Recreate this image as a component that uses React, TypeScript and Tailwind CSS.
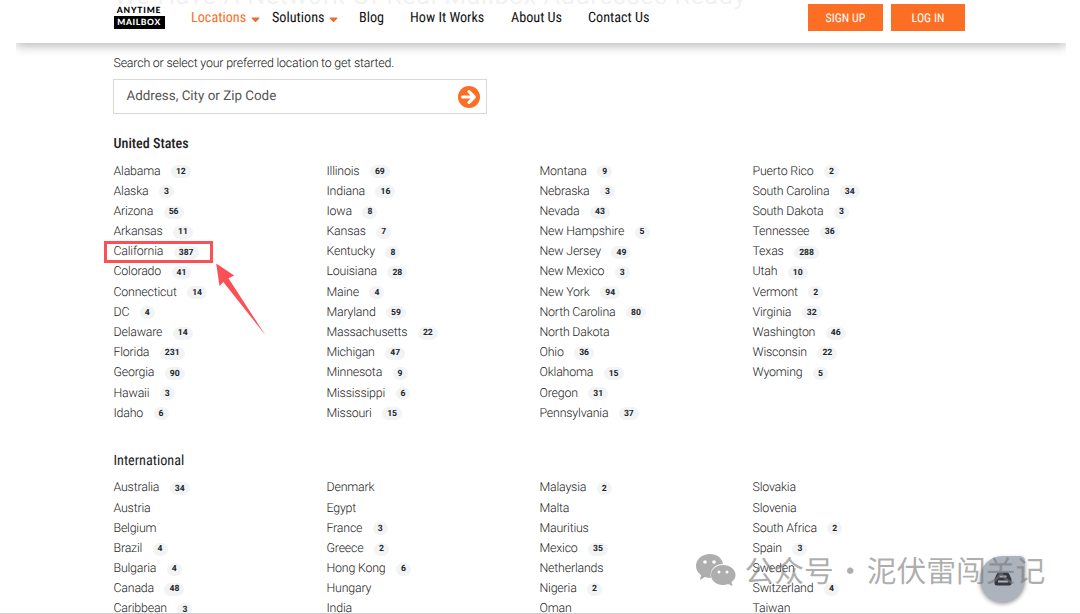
import React from "react";

type Entry = [string, number?];

const states: Entry[][] = [
  [["Alabama", 12], ["Alaska", 3], ["Arizona", 56], ["Arkansas", 11], ["California", 387], ["Colorado", 41], ["Connecticut", 14], ["DC", 4], ["Delaware", 14], ["Florida", 231], ["Georgia", 90], ["Hawaii", 3], ["Idaho", 6]],
  [["Illinois", 69], ["Indiana", 16], ["Iowa", 8], ["Kansas", 7], ["Kentucky", 8], ["Louisiana", 28], ["Maine", 4], ["Maryland", 59], ["Massachusetts", 22], ["Michigan", 47], ["Minnesota", 9], ["Mississippi", 6], ["Missouri", 15]],
  [["Montana", 9], ["Nebraska", 3], ["Nevada", 43], ["New Hampshire", 5], ["New Jersey", 49], ["New Mexico", 3], ["New York", 94], ["North Carolina", 80], ["North Dakota"], ["Ohio", 36], ["Oklahoma", 15], ["Oregon", 31], ["Pennsylvania", 37]],
  [["Puerto Rico", 2], ["South Carolina", 34], ["South Dakota", 3], ["Tennessee", 36], ["Texas", 288], ["Utah", 10], ["Vermont", 2], ["Virginia", 32], ["Washington", 46], ["Wisconsin", 22], ["Wyoming", 5]],
];

const countries: Entry[][] = [
  [["Australia", 34], ["Austria"], ["Belgium"], ["Brazil", 4], ["Bulgaria", 4], ["Canada", 48], ["Caribbean", 3]],
  [["Denmark"], ["Egypt"], ["France", 3], ["Greece", 2], ["Hong Kong", 6], ["Hungary"], ["India"]],
  [["Malaysia", 2], ["Malta"], ["Mauritius"], ["Mexico", 35], ["Netherlands"], ["Nigeria", 2], ["Oman"]],
  [["Slovakia"], ["Slovenia"], ["South Africa", 2], ["Spain", 3], ["Sweden"], ["Switzerland", 4], ["Taiwan"]],
];

const condensed = "font-['Roboto_Condensed','Roboto',sans-serif] [font-stretch:75%]";

function Columns({ data }: { data: Entry[][] }) {
  return (
    <div className="grid w-[852px] grid-cols-4">
      {data.map((column, i) => (
        <ul key={i}>
          {column.map(([name, count]) => (
            <li key={name} className="relative flex h-[20.18px] items-center whitespace-nowrap">
              <a className="pt-[2.7px] text-[12.4px] font-light tracking-[-0.2px] text-[#222]">{name}</a>
              {count !== undefined && (
                <span className="relative top-[1.2px] ml-[10.5px] flex h-[13px] items-center rounded-full bg-[#f2f3f4] px-[5px] pt-px text-[8.6px] font-bold text-[#212529]">
                  {count}
                </span>
              )}
              {name === "California" && (
                <>
                  <span className="absolute -left-[10px] -top-[0.5px] h-[22px] w-[109px] border-[3px] border-[#fb5055]" />
                  <svg className="absolute left-[101px] top-[21px]" width="52" height="75" viewBox="0 0 52 75" fill="#fb5055">
                    <path d="M1.2 1.5 L19.2 13.500 L13.5 16.3 L50.300 73 L8.3 20 L4.500 24 Z" />
                  </svg>
                </>
              )}
            </li>
          ))}
        </ul>
      ))}
    </div>
  );
}

function Caret() {
  return (
    <svg className="mt-[1px]" width="9" height="6" viewBox="0 0 9 6" fill="#ec6d31">
      <path d="M1.2.5h6.6q1 .2.4 1L5.2 4.7q-.7.7-1.4 0L.8 1.5Q.2.7 1.2.5Z" />
    </svg>
  );
}

function Header() {
  return (
    <header className="relative z-10 ml-[16px] flex h-[43px] w-[1050px] bg-white/90 pl-[97.5px] shadow-[0_3px_10px_rgba(0,0,0,0.28)] [clip-path:inset(0_0_-20px_0)]">
      <div className="mt-[4.5px] w-[51px] text-center font-['Lato',sans-serif] font-black text-black">
        <div className="h-[11.5px] whitespace-nowrap text-[8.5px] leading-[10px] tracking-[0.8px]">ANYTIME</div>
        <div className="h-[13px] w-[51px] whitespace-nowrap bg-black text-[8.5px] leading-[13px] tracking-[0.65px] text-white">MAILBOX</div>
      </div>
      <nav className={`ml-[26.5px] flex h-[38px] items-center whitespace-nowrap text-[14.2px] text-[#111] ${condensed}`}>
        <a className="w-[60px] text-[#fa6f28]">Locations</a>
        <Caret />
        <a className="ml-[12px] w-[57px]">Solutions</a>
        <Caret />
        <a className="ml-[21px] w-[51px]">Blog</a>
        <a className="w-[101px]">How It Works</a>
        <a className="w-[77px]">About Us</a>
        <a>Contact Us</a>
      </nav>
      <div className={`ml-auto mr-[101px] mt-[4px] flex gap-[8px] text-[12px] text-white ${condensed}`}>
        <a className="flex h-[27px] w-[75px] items-center justify-center bg-[#fb6e24]">SIGN UP</a>
        <a className="flex h-[27px] w-[74px] items-center justify-center bg-[#fb6e24]">LOG IN</a>
      </div>
    </header>
  );
}

export default function App() {
  return (
    <div className="relative h-[614px] w-[1080px] overflow-hidden bg-white font-['Roboto',sans-serif] [text-rendering:geometricPrecision]">
      <div className="absolute left-[114px] top-[-17px] whitespace-nowrap text-[25px] leading-[28px] tracking-[0.67px] text-[#777]">
        We Have A Network Of Real Mailbox Addresses Ready
      </div>
      <Header />
      <main className="pl-[113.5px]">
        <p className="pt-[12px] text-[12.4px] font-light leading-[18px] tracking-[-0.19px] text-[#111]">Search or select your preferred location to get started.</p>
        <div className="-ml-[0.5px] mt-[6px] flex h-[35px] w-[374px] items-center justify-between border border-[#d8d8d8] pl-[12.5px] pr-[6px]">
          <span className="pt-[2px] text-[13.4px] text-[#555]">Address, City or Zip Code</span>
          <svg width="22" height="22" viewBox="0 0 22 22">
            <circle cx="11" cy="11" r="11" fill="#fb6e24" />
            <path d="M4.500 11H15.500M11 5.700L16.300 11L11 16.300" fill="none" stroke="white" strokeWidth="3.200" strokeLinecap="round" strokeLinejoin="round" />
          </svg>
        </div>
        <h2 className={`mt-[19.5px] h-[27px] text-[14.1px] font-medium leading-[20px] text-[#222] ${condensed}`}>United States</h2>
        <Columns data={states} />
        <h2 className={`mt-[28px] h-[26.5px] pt-[0.5px] text-[14.2px] leading-[20px] text-[#222] ${condensed}`}>International</h2>
        <Columns data={countries} />
      </main>
      <div className="absolute left-[980px] top-[556px] flex h-[46px] w-[45px] items-center justify-center rounded-[23px] rounded-tr-[5px] bg-[#acb3bd] shadow-[0_2px_4px_rgba(0,0,0,0.4)]">
        <svg width="18" height="16" viewBox="0 0 18 16">
          <path d="M5 1.500h8q1.500 0 2.200 1.500L17.500 8v4q0 2.500-2.500 2.500H3Q.5 14.500.5 12V8l2.300-5Q3.500 1.500 5 1.500Z" fill="#343941" />
          <path d="M5.500 5.500h7M4 10.500h10" stroke="#acb3bd" strokeWidth="2" />
        </svg>
      </div>
      <svg className="absolute left-[695px] top-[552px] opacity-95" width="42" height="36" viewBox="0 0 42 36" fill="#aaa">
        <path d="M15 2C7 2 1 7 1 14c0 4 2 7 5 9l-1 5 5-3q3 1 6 1C14 18 20 12 28 12 27 6 22 2 15 2Z" />
        <path d="M28 13c-7 0-12 4.5-12 10s5 10 12 10q3 0 5-1l4.5 2-1-4c2.500-2 4-4 4-7 0-5.500-5.500-10-12.500-10Z" />
        <g fill="white">
          <circle cx="10" cy="10" r="1.8" />
          <circle cx="19" cy="10" r="1.8" />
          <circle cx="24" cy="20" r="1.5" />
          <circle cx="32" cy="20" r="1.5" />
        </g>
      </svg>
      <div className="absolute left-[744.5px] top-[548px] whitespace-nowrap font-['Noto_Sans_CJK_SC',sans-serif] text-[29.8px] leading-[42px] text-[#777]/60 [word-spacing:-5.200px]">
        公众号 · 泥伏雷闯关记
      </div>
      <div className="absolute bottom-0 left-0 h-px w-full bg-[#cfcfcf]" />
    </div>
  );
}
